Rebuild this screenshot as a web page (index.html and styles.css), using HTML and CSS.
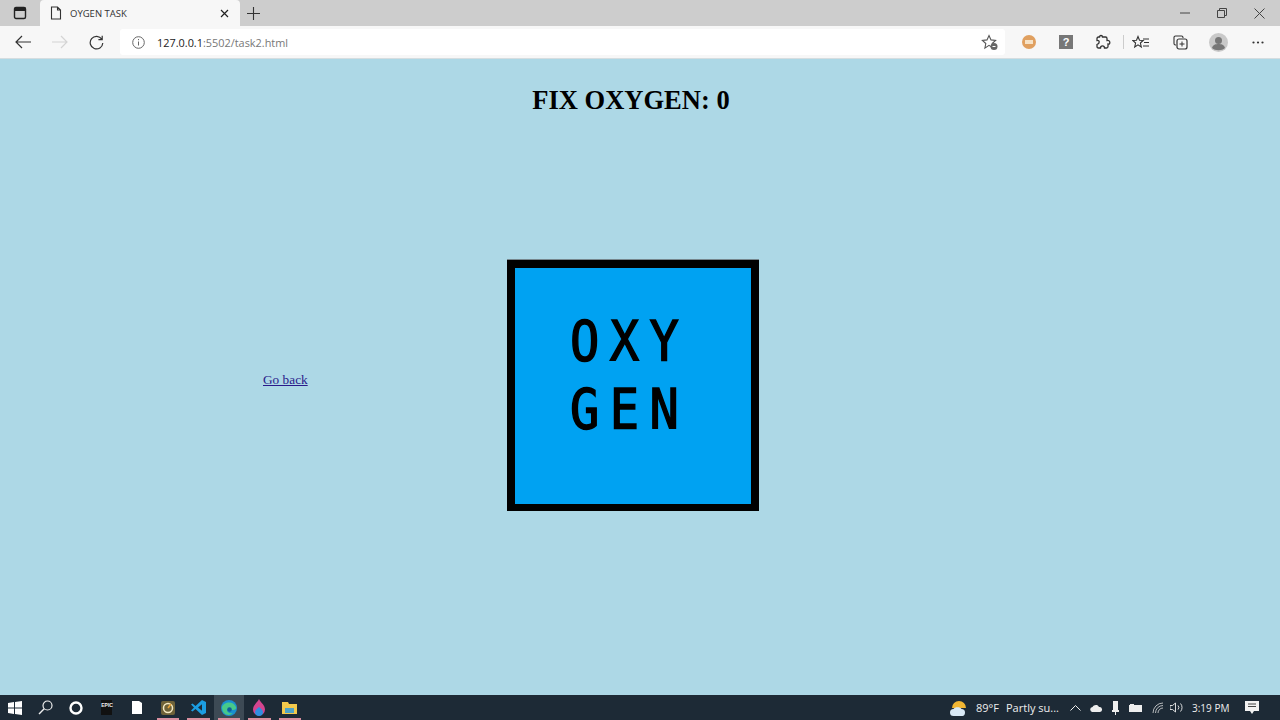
FILE: index.html
```html
<!DOCTYPE html>
<html lang="en">
<head>
    <meta charset="UTF-8">
    <title>OYGEN TASK</title>
    <link rel="stylesheet" href="styles.css">
</head>
<body>
    <div class="tabstrip">
        <div class="tab-actions">
            <svg width="14" height="14" viewBox="0 0 14 14"><rect x="1.5" y="1.5" width="11" height="11" rx="1.5" fill="none" stroke="#222" stroke-width="1.4"/><rect x="1.5" y="1.5" width="11" height="3.5" fill="#222"/></svg>
        </div>
        <div class="tab">
            <svg width="12" height="14" viewBox="0 0 12 14"><path d="M1.5 1h6l3 3v9h-9z M7.5 1v3h3" fill="none" stroke="#333" stroke-width="1.1"/></svg>
            <span class="tab-title">OYGEN TASK</span>
            <svg class="tab-close" width="9" height="9" viewBox="0 0 9 9"><path d="M1 1l7 7M8 1l-7 7" stroke="#222" stroke-width="1.2"/></svg>
        </div>
        <svg class="new-tab" width="13" height="13" viewBox="0 0 13 13"><path d="M6.5 0v13M0 6.5h13" stroke="#333" stroke-width="1.1"/></svg>
        <div class="window-controls">
            <svg width="10" height="10" viewBox="0 0 10 10"><path d="M0 5h10" stroke="#444"/></svg>
            <svg width="10" height="10" viewBox="0 0 10 10"><path d="M2.5 2V.5h7v7H8M.5 2.5h7v7h-7z" fill="none" stroke="#444"/></svg>
            <svg width="11" height="11" viewBox="0 0 11 11"><path d="M.5.5l10 10M10.5.5l-10 10" stroke="#444"/></svg>
        </div>
    </div>

    <div class="toolbar">
        <div class="nav-buttons">
            <svg width="16" height="14" viewBox="0 0 16 14"><path d="M7 1L1 7l6 6M1 7h15" fill="none" stroke="#333" stroke-width="1.2"/></svg>
            <svg width="16" height="14" viewBox="0 0 16 14"><path d="M9 1l6 6-6 6M15 7H0" fill="none" stroke="#d4d4d4" stroke-width="1.2"/></svg>
            <svg width="15" height="15" viewBox="0 0 15 15"><path d="M12.8 4.2A6.3 6.3 0 1 0 13.8 8M13.2 .8v3.8H9.4" fill="none" stroke="#333" stroke-width="1.2"/></svg>
        </div>
        <div class="address-bar">
            <svg width="13" height="13" viewBox="0 0 13 13"><circle cx="6.5" cy="6.5" r="5.8" fill="none" stroke="#666"/><path d="M6.5 5.5v4M6.5 3v1.2" stroke="#666"/></svg>
            <span class="url"><span class="url-host">127.0.0.1</span>:5502/task2.html</span>
            <svg class="fav-add" width="18" height="17" viewBox="0 0 18 17"><path d="M8 1.5l2 4.4 4.6.5-3.4 3.1.9 4.6L8 11.4l-4.1 2.7.9-4.6L1.4 6.4 6 5.900z" fill="none" stroke="#555" stroke-width="1.1"/><circle cx="13" cy="12.500" r="3.500" fill="#666"/><path d="M11.500 12.500h3" stroke="#fff"/></svg>
        </div>
        <div class="extensions">
            <div class="ext-orange"><span></span></div>
            <div class="ext-help">?</div>
            <svg width="16" height="16" viewBox="0 0 16 16"><path d="M6 1.500c1 0 1.500 .8 1.500 1.500h3c1 0 1.500.5 1.500 1.500v2c1.500-.4 2.800.4 2.800 1.800S14.500 10.400 13 10v2.500c0 1-.5 1.500-1.500 1.500h-2c0-1.500-1-2.200-2-2.200s-2 .7-2 2.200H3.500c-1 0-1.500-.5-1.500-1.500v-2C3.500 10 4.200 9 4.200 8S3.500 6.200 2 6.500v-2C2 3.500 2.500 3 3.500 3h1c0-.8.500-1.500 1.500-1.500z" fill="none" stroke="#333" stroke-width="1.300"/></svg>
            <div class="separator"></div>
            <svg class="ext-fav" width="17" height="15" viewBox="0 0 17 15"><path d="M6 1.500l1.500 3.700 3.700.3-2.800 2.500.9 4L6 9.900l-3.300 2.100.9-4L.8 5.500l3.700-.3z" fill="none" stroke="#333" stroke-width="1.100"/><path d="M11 4h6M12 7.500h5M11 11h6" stroke="#333"/></svg>
            <svg class="ext-collections" width="15" height="15" viewBox="0 0 15 15"><path d="M3 10H2.500A1.500 1.500 0 0 1 1 8.500v-6A1.500 1.500 0 0 1 2.500 1h6A1.500 1.500 0 0 1 10 2.500V3" fill="none" stroke="#333" stroke-width="1.100"/><rect x="4" y="4" width="10" height="10" rx="2" fill="none" stroke="#333" stroke-width="1.200"/><path d="M9 6.500v5M6.500 9h5" stroke="#333"/></svg>
            <svg class="ext-avatar" width="19" height="19" viewBox="0 0 19 19"><circle cx="9.500" cy="9.500" r="9.500" fill="#c9c9c9"/><circle cx="9.500" cy="7.500" r="3.500" fill="#777"/><path d="M3 15c1-3.500 3.500-4 6.500-4s5.500.5 6.500 4c-3 3-10 3-13 0z" fill="#777"/></svg>
            <svg class="more" width="12" height="3" viewBox="0 0 12 3"><circle cx="1.500" cy="1.500" r="1.100" fill="#333"/><circle cx="6" cy="1.500" r="1.100" fill="#333"/><circle cx="10.500" cy="1.500" r="1.100" fill="#333"/></svg>
        </div>
    </div>

    <main class="page">
        <h1>FIX OXYGEN: 0</h1>
        <div class="task-row">
            <a href="#" class="back-link">Go back</a>
            <div class="oxygen-tile">
                <div class="oxygen-label">OXY<br>GEN</div>
            </div>
        </div>
    </main>

    <footer class="taskbar">
        <div class="task-icons">
            <div class="slot"><svg width="14" height="14" viewBox="0 0 14 14"><path d="M0 2l6-.9V6.500H0zM7 1l7-1v6.500H7zM0 7.500h6v5.400L0 12zM7 7.500h7V14l-7-1z" fill="#fff"/></svg></div>
            <div class="slot"><svg width="15" height="15" viewBox="0 0 15 15"><circle cx="9.500" cy="5.500" r="4.500" fill="none" stroke="#eee" stroke-width="1.200"/><path d="M6.200 8.800L1 14" stroke="#eee" stroke-width="1.400"/></svg></div>
            <div class="slot"><svg width="14" height="14" viewBox="0 0 14 14"><circle cx="7" cy="7" r="5.500" fill="none" stroke="#fff" stroke-width="2.400"/></svg></div>
            <div class="slot"><div class="epic">EPIC</div></div>
            <div class="slot"><svg width="10" height="13" viewBox="0 0 10 13"><path d="M0 0h7l3 2v11H0z" fill="#fff"/></svg></div>
            <div class="slot app-open"><svg width="14" height="14" viewBox="0 0 14 14"><rect width="14" height="14" rx="2" fill="#6e6238"/><circle cx="7" cy="7" r="4.500" fill="none" stroke="#f4e9c3" stroke-width="1.500"/><path d="M7 7l3-4" stroke="#e8a33a" stroke-width="1.500"/></svg></div>
            <div class="slot app-open"><svg width="15" height="15" viewBox="0 0 15 15"><path d="M11 0l4 2v11l-4 2L4.500 9 1.500 11.500 0 10.500 3 7.500 0 4.500l1.500-1L4.500 6zM11 4.300L7 7.500l4 3.200z" fill="#1b9de2"/></svg></div>
            <div class="slot app-open app-active"><svg width="16" height="16" viewBox="0 0 16 16"><circle cx="8" cy="8" r="8" fill="#1a8fd0"/><path d="M1 7c1.500-5 11-7 14 0 .500 2-1 3-3 3H6c0 2 2.500 4 6 3-4 4-11 2-11-6z" fill="#47c98a"/><circle cx="8.500" cy="9.500" r="2.300" fill="#0f5f9c"/></svg></div>
            <div class="slot app-open"><svg width="14" height="17" viewBox="0 0 14 17"><path d="M7 0c2 4 6 6 6 10.500a6 6 0 0 1-12 0C1 6 5 4 7 0z" fill="#d4458f"/><path d="M7 8c2 2 4 3 4 5a4 4 0 0 1-8 0c0-2 2-3 4-5z" fill="#2f8fe0"/></svg></div>
            <div class="slot app-open"><svg width="15" height="13" viewBox="0 0 15 13"><path d="M0 1h6l1 2h8v10H0z" fill="#f2c94c"/><rect x="3" y="7" width="9" height="5" fill="#4fa3c7"/></svg></div>
        </div>
        <div class="tray">
            <svg class="weather" width="18" height="20" viewBox="0 0 18 20"><path d="M2 10a7 7 0 0 1 14 0z" fill="#f2b632"/><path d="M3.500 18a3.500 3.500 0 0 1 0-7c1-2.500 7-2.500 8 0a3.500 3.500 0 0 1 3.500 3.500c0 2-1 3.500-2.500 3.500z" fill="#d9e9f5"/></svg>
            <span class="temp">89°F</span>
            <span class="forecast">Partly su...</span>
            <svg class="tray-caret" width="11" height="6" viewBox="0 0 11 6"><path d="M.5 5.500l5-5 5 5" fill="none" stroke="#eee"/></svg>
            <svg class="tray-cloud" width="13" height="8" viewBox="0 0 13 8"><path d="M3 8a2.500 2.500 0 0 1-.5-5C3.500.500 8 0 9 3a2.500 2.500 0 0 1 1 5z" fill="#eee"/></svg>
            <svg class="tray-usb" width="7" height="14" viewBox="0 0 7 14"><path d="M1 0h5v9h1v2H0V9h1z" fill="#eee"/><path d="M3.500 11v3" stroke="#eee"/></svg>
            <svg class="tray-battery" width="14" height="8" viewBox="0 0 14 8"><rect y="1" width="13" height="7" fill="#eee"/><rect x="1" width="4" height="2" fill="#eee"/></svg>
            <svg class="tray-wifi" width="11" height="11" viewBox="0 0 11 11"><path d="M1 11a10 10 0 0 1 10-10M3.500 11A7.500 7.500 0 0 1 11 3.500M6 11a5 5 0 0 1 5-5" fill="none" stroke="#ddd" stroke-width=".8"/></svg>
            <svg class="tray-volume" width="14" height="11" viewBox="0 0 14 11"><path d="M0 3.500h2.500L5.500 1v9L2.500 7.500H0z" fill="none" stroke="#eee" stroke-width=".9"/><path d="M8 3.500a3 3 0 0 1 0 4M10.500 1.500a6 6 0 0 1 0 8" fill="none" stroke="#eee" stroke-width=".9"/></svg>
            <span class="clock">3:19 PM</span>
            <svg class="tray-notify" width="14" height="13" viewBox="0 0 14 13"><path d="M0 0h14v10H9l-2 3-2-3H0z" fill="#f2f2f2"/><path d="M3 3h8M3 5.500h8" stroke="#444"/></svg>
        </div>
    </footer>
</body>
</html>
```

FILE: styles.css
```css
* {
    margin: 0;
    padding: 0;
    box-sizing: border-box;
}

body {
    display: flex;
    flex-direction: column;
    height: 720px;
    overflow: hidden;
    background-color: #add8e6;
    font-family: 'Open Sans', 'Noto Sans', sans-serif;
}

svg {
    display: block;
    flex-shrink: 0;
}

/* browser tabs */
.tabstrip {
    display: flex;
    align-items: flex-end;
    height: 26px;
    background-color: #cdcdcd;
}

.tab-actions {
    display: flex;
    align-items: center;
    justify-content: center;
    width: 40px;
    height: 26px;
}

.tab {
    display: flex;
    align-items: center;
    width: 200px;
    height: 26px;
    padding: 0 10px 0 10px;
    background-color: #f7f7f7;
    border-radius: 4px 4px 0 0;
}

.tab-title {
    margin-left: 8px;
    font-size: 9.500px;
    color: #333;
}

.tab-close {
    margin-left: auto;
    margin-right: 1px;
}

.new-tab {
    align-self: center;
    margin-left: 7px;
}

.window-controls {
    display: flex;
    align-items: center;
    gap: 27px;
    align-self: center;
    margin-left: auto;
    margin-right: 15px;
}

/* address row */
.toolbar {
    display: flex;
    align-items: center;
    height: 33px;
    background-color: #f7f7f7;
    border-bottom: 1px solid #d5dde0;
}

.nav-buttons {
    display: flex;
    align-items: center;
    gap: 21px;
    width: 120px;
    padding-left: 15px;
}

.address-bar {
    display: flex;
    align-items: center;
    width: 885px;
    height: 26px;
    padding: 0 6px 0 12px;
    background-color: #fff;
    border-radius: 3px;
}

.url {
    margin-left: 12px;
    font-size: 10.900px;
    color: #777;
}

.url-host {
    color: #222;
}

.fav-add {
    margin-left: auto;
}

.extensions {
    display: flex;
    align-items: center;
    gap: 22px;
    margin-left: 17px;
}

.ext-orange {
    display: flex;
    align-items: center;
    justify-content: center;
    width: 14px;
    height: 14px;
    background-color: #e0a060;
    border-radius: 50%;
}

.ext-orange span {
    width: 8px;
    height: 4px;
    background-color: #f6e3c8;
}

.ext-help {
    width: 14px;
    height: 14px;
    margin-left: 1px;
    background-color: #777;
    color: #fff;
    font-family: 'Liberation Sans', sans-serif;
    font-size: 11px;
    font-weight: bold;
    line-height: 14px;
    text-align: center;
}

.separator {
    width: 1px;
    height: 14px;
    margin: 0 -13px 0 -10px;
    background-color: #ccc;
}

.ext-fav {
    margin-left: -1px;
}

.ext-collections {
    margin-left: 2px;
}

.ext-avatar {
    margin-left: -1px;
}

.more {
    margin-left: 2px;
}

/* page content */
.page {
    flex: 1;
    background-color: #add8e6;
}

h1 {
    padding-top: 26px;
    padding-right: 18px;
    font-family: 'Liberation Serif', serif;
    font-size: 26.500px;
    line-height: 30px;
    text-align: center;
    color: #000;
}

.task-row {
    display: flex;
    align-items: center;
    margin-top: 145px;
    padding-left: 263px;
}

.back-link {
    position: relative;
    top: -6px;
    width: 44px;
    font-family: 'Liberation Serif', serif;
    font-size: 13.300px;
    color: #2a1a8a;
    white-space: nowrap;
}

.oxygen-tile {
    display: flex;
    align-items: center;
    justify-content: center;
    width: 252px;
    height: 251px;
    margin-left: 200px;
    padding-right: 7px;
    padding-bottom: 23px;
    background-color: #00a2f2;
    border: 8px solid #000;
    border-bottom-width: 7px;
    box-shadow: 0 -1px 0 #77878e;
}

.oxygen-label {
    font-family: 'DejaVu Sans Mono', monospace;
    font-size: 56px;
    line-height: 68px;
    letter-spacing: 12px;
    color: #000;
    -webkit-text-stroke: 1.5px #000;
    transform: scaleX(0.87);
    white-space: nowrap;
}

/* windows taskbar */
.taskbar {
    display: flex;
    align-items: center;
    justify-content: space-between;
    height: 25px;
    background-color: #1d2a36;
    color: #eee;
}

.task-icons {
    display: flex;
    align-items: center;
    height: 100%;
}

.slot {
    position: relative;
    display: flex;
    align-items: center;
    justify-content: center;
    width: 30.500px;
    height: 100%;
}

.app-open::after {
    content: "";
    position: absolute;
    left: 4px;
    right: 4px;
    bottom: 0;
    height: 2px;
    background-color: #d98f9f;
}

.app-active {
    background-color: #3d4a55;
}

.epic {
    width: 11px;
    height: 15px;
    background-color: #111;
    font-family: 'Liberation Sans', sans-serif;
    font-size: 5px;
    font-weight: bold;
    line-height: 10px;
    text-align: center;
    color: #eee;
}

.tray {
    display: flex;
    align-items: center;
    padding-right: 21px;
    font-size: 11px;
}

.temp {
    margin-left: 8px;
}

.forecast {
    margin-left: 7px;
    width: 55px;
    white-space: nowrap;
}

.tray-caret {
    margin-left: 9px;
}

.tray-cloud {
    margin-left: 9px;
}

.tray-usb {
    margin-left: 9px;
}

.tray-battery {
    margin-left: 10px;
}

.tray-wifi {
    margin-left: 9px;
}

.tray-volume {
    margin-left: 7px;
}

.clock {
    width: 36px;
    margin-left: 8px;
    font-size: 10px;
    white-space: nowrap;
}

.tray-notify {
    margin-left: 17px;
}
```
